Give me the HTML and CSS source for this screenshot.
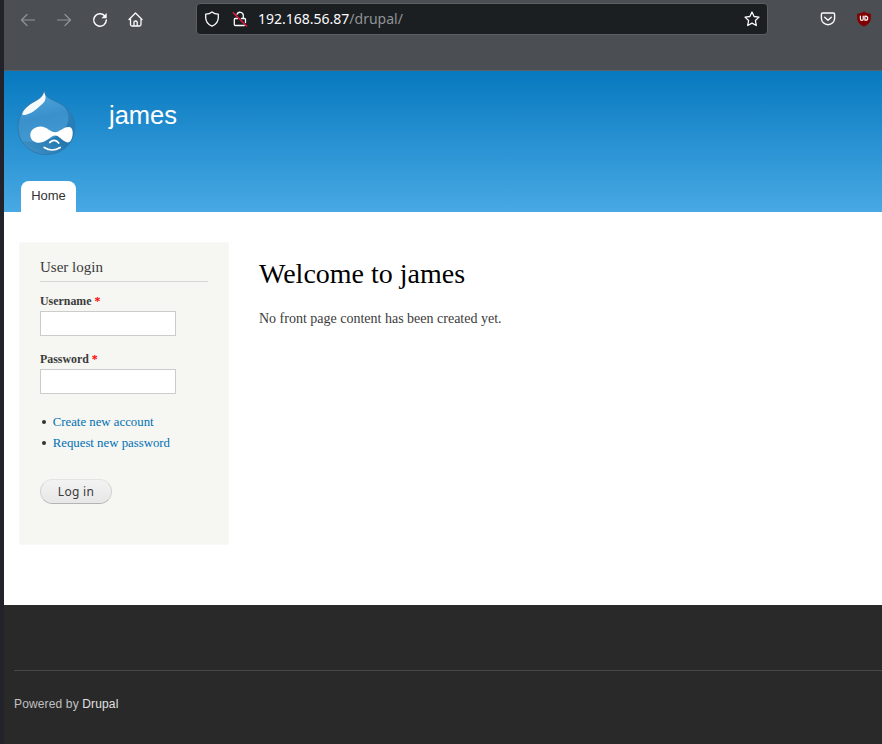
FILE: index.html
```html
<!DOCTYPE html>
<html lang="en">
<head>
<meta charset="utf-8">
<title>Welcome to james | james</title>
<link rel="stylesheet" href="styles.css">
</head>
<body>
<div class="window">
  <div class="toolbar">
    <div class="nav-icons">
      <svg class="icon dim" viewBox="0 0 16 16"><path d="M14.5 8H1.7M7 2.5 1.5 8 7 13.5"/></svg>
      <svg class="icon dim" viewBox="0 0 16 16"><path d="M1.500 8h12.800M9 2.500 14.500 8 9 13.500"/></svg>
      <svg class="icon" viewBox="0 0 16 16"><path d="M12.600 3.700A6.300 6.300 0 1 0 14.300 8" stroke-width="1.500"/><path d="M14.700 1v5.300H9.400z" fill="#fbfbfe" stroke="none"/></svg>
      <svg class="icon" viewBox="0 0 16 16"><path d="M1 7.500 7.500 1 14 7.500M2.500 6.500V12.500q0 1.500 1.500 1.500h7.500q1.500 0 1.500-1.500V6.500M6 14v-4q0-1 1.600-1t1.600 1v4" stroke-width="1.300"/></svg>
    </div>
    <div class="address">
      <svg class="icon" viewBox="0 0 16 16"><path d="M8 .9C6.300 2.300 4 3 1.700 3.200v3.300c0 4.100 2.300 7 6.300 8.700 4-1.700 6.300-4.600 6.300-8.700V3.200C12 3 9.700 2.300 8 .9z"/></svg>
      <svg class="icon lock" viewBox="0 0 16 16"><path d="M5 3.200A3.300 3.300 0 0 1 11.300 4.500V7M9.500 7.500h3q1 0 1 1v3M3.200 7.500q-.9.200-.9 1v5q0 1 1 1h9M3.200 7.500h2.300"/><path d="m1.300 1.800 13.200 13.200" stroke="#e5173f" stroke-width="1.500"/></svg>
      <span class="url"><b>192.168.56.87</b>/drupal/</span>
      <svg class="icon star" viewBox="0 0 16 16"><path d="m8 1 2.100 4.500 4.900.6-3.600 3.400.9 5L8 12.100l-4.300 2.400.9-5L1 6.100l4.900-.6z"/></svg>
    </div>
    <div class="extensions">
      <svg class="icon" viewBox="0 0 16 16"><path d="M2.600 2h10.800q1.200 0 1.200 1.200v4A6.600 6.600 0 0 1 1.400 7.200v-4Q1.400 2 2.600 2zM4.700 6.200 8 9.300l3.300-3.100" stroke-width="1.400"/></svg>
      <svg class="icon" viewBox="0 0 16 16"><path d="M8 .5C6 2 3.500 2.600 1.200 2.700v4.200c0 4 2.500 6.500 6.800 8.600 4.300-2.100 6.800-4.600 6.800-8.600V2.700C12.500 2.600 10 2 8 .5z" fill="#800000" stroke="none"/><path d="M4.400 5v3q0 1.300 1.400 1.300T7.200 8V5M8.900 5.200v4h.8a2 2 0 0 0 0-4z" stroke-width="1.200"/></svg>
    </div>
  </div>

  <header class="site-header">
    <div class="branding">
      <svg class="logo" viewBox="8.300 6.500 58 65">
        <defs>
          <linearGradient id="drop" x1="0" y1="0" x2=".2" y2="1"><stop offset="0" stop-color="#5aabdd"/><stop offset=".5" stop-color="#3990cb"/><stop offset="1" stop-color="#4a9ed3"/></linearGradient>
          <linearGradient id="shade" x1="0" y1="1" x2="1" y2="0"><stop offset="0" stop-color="#4598cd"/><stop offset=".5" stop-color="#2678b0"/><stop offset="1" stop-color="#2c82bd"/></linearGradient>
          <clipPath id="outline"><path d="M34.500 5C35 10 36.500 12 41 14.500 48 18 54 20 59 26.500 63 31 65 37 65 43 65 59 52 70 36.500 70 20 70 8.300 58 8.300 43 8.300 33 13 25 20 19.500 26 15.500 33 13.500 34.500 5z"/></clipPath>
        </defs>
        <g clip-path="url(#outline)">
          <path d="M8 4h58v67H8z" fill="url(#drop)"/>
          <path d="M54 21q9 12 1 23-9 11-24 13-12 1-23-1v15h58V22z" fill="url(#shade)"/>
        </g>
        <path d="M34.500 6.500C34 13 28 15.500 22 19c-6 4-9 6.500-9.500 10-.2 2 2 1.700 4.500 1 8-2.500 10-6 15-10 4-3 5-6.500 2.500-13.500z" fill="#fff" opacity=".95"/>
        <path d="M34.500 5C35 10 36.500 12 41 14.500 48 18 54 20 59 26.500 63 31 65 37 65 43 65 59 52 70 36.500 70 20 70 8.300 58 8.300 43 8.300 33 13 25 20 19.500 26 15.500 33 13.500 34.500 5z" fill="none" stroke="#2a74a6" stroke-width=".8"/>
        <path d="M31 42c6 0 10 5.800 14.500 5.800 4 0 8-5.300 13.200-5.300 3 0 4.300 2 4.300 5.500 0 5.500-2 10-5 10-4 0-8.500-6.900-12.500-6.900-4.500 0-8.500 7.100-16 7.100-5 0-8.900-3-8.900-7.800S25 42 31 42z" fill="#fff"/>
        <path d="M40 58q5-4.500 9 .5M34.500 63q8 5 16 0" fill="none" stroke="#fff" stroke-width="1.700" stroke-linecap="round"/>
      </svg>
      <div class="site-name">james</div>
    </div>
    <nav><a class="tab">Home</a></nav>
  </header>

  <main class="page">
    <aside class="sidebar">
      <h2>User login</h2>
      <form>
        <label for="user">Username <span class="required">*</span></label>
        <input id="user" type="text">
        <label for="pass">Password <span class="required">*</span></label>
        <input id="pass" type="password">
        <ul>
          <li><a>Create new account</a></li>
          <li><a>Request new password</a></li>
        </ul>
        <button type="button">Log in</button>
      </form>
    </aside>
    <section class="content">
      <h1>Welcome to james</h1>
      <p>No front page content has been created yet.</p>
    </section>
  </main>

  <footer class="site-footer">
    <div class="credit">Powered by <a>Drupal</a></div>
  </footer>
</div>
</body>
</html>
```
FILE: styles.css
```css
* { box-sizing: border-box; }

body {
  margin: 0;
  height: 744px;
  overflow: hidden;
  background: #fff;
  color: #3b3b3b;
  font-family: "Liberation Serif", serif;
}

.window {
  height: 744px;
  display: flex;
  flex-direction: column;
  border-left: 4px solid #21222a;
}

.toolbar {
  flex: none;
  height: 71px;
  display: flex;
  align-items: flex-start;
  background: #4b4e53;
  border-bottom: 1px solid #5c6065;
}

.icon {
  flex: none;
  display: block;
  width: 16px;
  height: 16px;
  fill: none;
  stroke: #fbfbfe;
  stroke-width: 1.3;
  stroke-linecap: round;
  stroke-linejoin: round;
}

.dim { stroke: #929497; stroke-width: 1.2; }

.nav-icons {
  width: 192px;
  padding: 12px 0 0 16px;
  display: flex;
  gap: 20px;
}

.address {
  width: 572px;
  height: 32px;
  margin-top: 3px;
  padding: 0 7px;
  display: flex;
  align-items: center;
  background: #1b1f22;
  border: 1px solid #5c6065;
  border-radius: 4px;
}

.lock { margin-left: 12px; }
.star { margin-left: auto; }

.url {
  margin-left: 10px;
  color: #909396;
  font: 14px/20px "Noto Sans", sans-serif;
}

.url b { color: #fbfbfe; font-weight: 400; }

.extensions {
  padding: 11px 0 0 52px;
  display: flex;
  gap: 20px;
}

.site-header {
  flex: none;
  height: 141px;
  display: flex;
  flex-direction: column;
  justify-content: space-between;
  background: linear-gradient(#0779bf, #48a9e4);
  font-family: "Liberation Sans", sans-serif;
}

.branding {
  padding: 20px 0 0 14px;
  display: flex;
  gap: 33px;
}

.logo { width: 58px; height: 65px; overflow: visible; }

.site-name {
  padding-top: 9px;
  color: #fffeff;
  font-size: 25.5px;
  line-height: 30px;
}

nav { padding-left: 17px; display: flex; }

.tab {
  height: 31px;
  width: 55px;
  background: #fff;
  border-radius: 8px 8px 0 0;
  color: #333;
  font-size: 13px;
  line-height: 30px;
  text-align: center;
}

.page {
  flex: none;
  height: 393px;
  padding: 30px 0 0 15px;
  display: flex;
  align-items: flex-start;
  gap: 30px;
}

.sidebar {
  width: 210px;
  height: 303px;
  padding: 15px 20px;
  background: #f6f6f2;
  border: 1px solid #f9f9f9;
}

h2 {
  margin: 0 0 10px;
  height: 24px;
  border-bottom: 1px solid #d6d6d6;
  font-size: 15px;
  font-weight: 400;
  line-height: 19px;
}

label {
  display: block;
  height: 19px;
  font-size: 11.9px;
  font-weight: 700;
  line-height: 18px;
}

.required { color: #f00; }

input {
  display: block;
  width: 136px;
  height: 25px;
  margin: 0 0 14px;
  border: 1px solid #ccc;
  background: #fff;
}

ul {
  margin: 18px 0 25px;
  padding: 0 0 0 12.7px;
  font-size: 12.8px;
  line-height: 21px;
  list-style: none;
}

li { display: flex; align-items: center; }

li::before {
  content: "";
  width: 4px;
  height: 4px;
  margin: 0 7px 2px -11px;
  border-radius: 50%;
  background: #333;
}

li a { color: #0071b3; }

button {
  display: block;
  width: 72px;
  height: 25px;
  padding: 0;
  border: 1px solid #e4e4e4;
  border-bottom-color: #b4b4b4;
  border-left-color: #d2d2d2;
  border-right-color: #d2d2d2;
  border-radius: 13px;
  background: linear-gradient(#f3f3f3, #e7e7e7);
  color: #3a3a3a;
  font: 12px/22px "Noto Sans", sans-serif;
  letter-spacing: .3px;
}

h1 {
  margin: 14px 0 16px;
  color: #000;
  font-size: 28px;
  font-weight: 400;
  line-height: 36px;
}

p { margin: 0; font-size: 14px; line-height: 21px; }

.site-footer {
  flex: 1;
  padding: 65px 0 0 10px;
  background: #292929;
}

.credit {
  padding-top: 24px;
  border-top: 1px solid #484848;
  color: #c0c0c0;
  font: 12px/18px "Liberation Sans", sans-serif;
  letter-spacing: .14px;
}

.credit a { color: #e0e0e0; }
```
